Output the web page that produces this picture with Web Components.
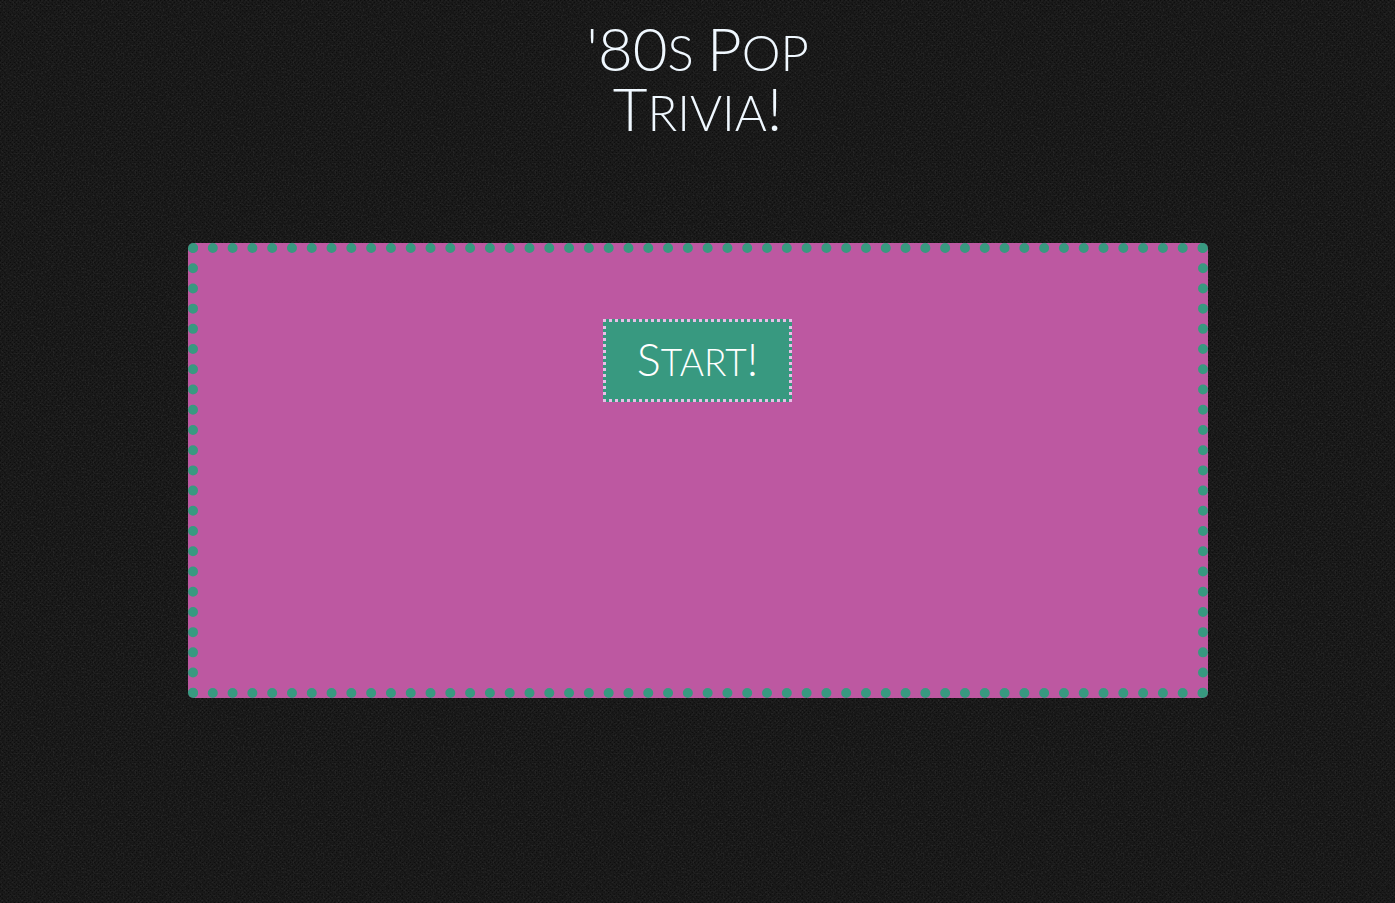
<!DOCTYPE html>
<html lang="en">
<head>
<meta charset="utf-8">
<title>'80s Pop Trivia!</title>
<style>
body {
  margin: 0;
  min-height: 100vh;
  background-color: #171717;
  background-image:
    url("data:image/svg+xml,%3Csvg xmlns='http://www.w3.org/2000/svg' width='200' height='200'%3E%3Cfilter id='n' x='0' y='0' width='100%25' height='100%25'%3E%3CfeTurbulence type='fractalNoise' baseFrequency='0.6' numOctaves='2' stitchTiles='stitch'/%3E%3CfeColorMatrix values='0 0 0 0 1 0 0 0 0 1 0 0 0 0 1 0.16 0 0 0 -0.07'/%3E%3C/filter%3E%3Crect width='200' height='200' filter='url(%23n)'/%3E%3C/svg%3E"),
    url("data:image/svg+xml,%3Csvg xmlns='http://www.w3.org/2000/svg' width='4' height='4' shape-rendering='crispEdges'%3E%3Cpath d='M0 0h1v1H0zM2 2h1v1H2z' fill='%230d0d0d'/%3E%3Cpath d='M2 0h1v1H2zM0 2h1v1H0z' fill='%231a1a1a'/%3E%3C/svg%3E");
  font-family: Lato, "Open Sans", sans-serif;
}
/* Large initials set among smaller capitals */
.cap { font-size: 60px; line-height: 0; }
.button-cap { font-size: 45px; line-height: 0; }
</style>
</head>
<body>
<trivia-app>
  <trivia-title slot="title"><span class="cap">'80</span>s <span class="cap">P</span>op <span class="cap">T</span>rivia<span class="cap">!</span></trivia-title>
  <trivia-board><start-button><span class="button-cap">S</span>tart<span class="button-cap">!</span></start-button></trivia-board>
</trivia-app>
<script>
function define(name, html) {
  const template = document.createElement("template");
  template.innerHTML = html;
  customElements.define(name, class extends HTMLElement {
    constructor() {
      super();
      this.attachShadow({ mode: "open" }).append(template.content.cloneNode(true));
    }
  });
}

define("trivia-app", `
  <style>
    :host { display: block; padding: 22px 20px; }
    main { display: flex; flex-direction: column; align-items: center; gap: 101px; }
  </style>
  <main><slot name="title"></slot><slot></slot></main>`);

define("trivia-title", `
  <style>
    :host { display: block; max-width: 260px; }
    h1 {
      margin: 0;
      color: #f0f8ff;
      font-size: 49px;
      font-weight: 300;
      text-transform: uppercase;
      line-height: 60px;
      text-align: center;
    }
  </style>
  <h1><slot></slot></h1>`);

define("trivia-board", `
  <style>
    :host {
      display: flex;
      justify-content: center;
      align-items: flex-start;
      box-sizing: border-box;
      width: 100%;
      max-width: 1020px;
      min-height: 455px;
      padding: 66px 20px;
      border: 10px dotted #389980;
      border-radius: 5px;
      background: #bd58a1;
    }
  </style>
  <slot></slot>`);

define("start-button", `
  <style>
    :host { display: block; }
    button {
      display: block;
      margin: 0;
      padding: 15px 31px 13px;
      border: 3px dotted #e8bfe8;
      background: #389980;
      color: #fff;
      font-family: inherit;
      font-size: 37px;
      font-weight: 300;
      text-transform: uppercase;
      line-height: 49px;
      cursor: pointer;
    }
  </style>
  <button type="button"><slot></slot></button>`);
</script>
</body>
</html>
